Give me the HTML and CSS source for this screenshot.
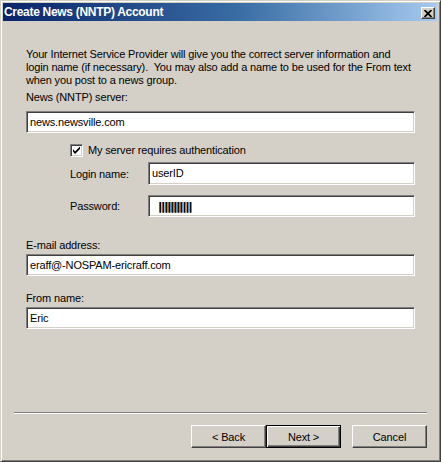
FILE: index.html
```html
<!DOCTYPE html>
<html lang="en">
<head>
    <meta charset="UTF-8">
    <title>Create News (NNTP) Account</title>
    <link rel="stylesheet" href="styles.css">
</head>
<body>
    <div class="window">
        <div class="titlebar">
            <span class="title">Create News (NNTP) Account</span>
            <span class="close">
                <svg width="8" height="7" viewBox="0 0 8 7"><path d="M0.5 0 L7.5 7 M7.5 0 L0.5 7" stroke="#000" stroke-width="1.8"/></svg>
            </span>
        </div>
        <div class="content">
            <p class="intro">Your Internet Service Provider will give you the correct server information and<br>login name (if necessary).&nbsp; You may also add a name to be used for the From text<br>when you post to a news group.</p>

            <div class="field server">
                <label>News (NNTP) server:</label>
                <div class="textbox">news.newsville.com</div>
            </div>

            <div class="auth">
                <div class="check-row">
                    <span class="checkbox">
                        <svg width="9" height="9" viewBox="0 0 9 9"><path d="M1 3 L3 5.5 L8 0.5 L8 3 L3 8 L1 5.5 Z" fill="#000"/></svg>
                    </span>
                    <span>My server requires authentication</span>
                </div>
                <div class="inline-field login">
                    <label>Login name:</label>
                    <div class="textbox">userID</div>
                </div>
                <div class="inline-field password">
                    <label>Password:</label>
                    <div class="textbox"><span class="pw">|||||||||||</span></div>
                </div>
            </div>

            <div class="field email">
                <label>E-mail address:</label>
                <div class="textbox">eraff@-NOSPAM-ericraff.com</div>
            </div>

            <div class="field from">
                <label>From name:</label>
                <div class="textbox">Eric</div>
            </div>
        </div>
        <div class="footer">
            <div class="separator"></div>
            <div class="buttons">
                <button class="btn">&lt; Back</button>
                <button class="btn default">Next &gt;</button>
                <button class="btn cancel">Cancel</button>
            </div>
        </div>
    </div>
</body>
</html>
```

FILE: styles.css
```css
body {
    margin: 0;
    font-family: "Liberation Sans", Arial, sans-serif;
    font-size: 11px;
    letter-spacing: -0.15px;
    color: #000;
    background: #d4d0c8;
}
.window {
    width: 441px;
    height: 462px;
    box-sizing: border-box;
    background: #d4d0c8;
    border-top: 1px solid #d4d0c8;
    border-left: 1px solid #d4d0c8;
    border-right: 1px solid #404040;
    border-bottom: 1px solid #404040;
    box-shadow: inset 1px 1px #fff, inset -1px -1px #808080;
    display: flex;
    flex-direction: column;
}
.titlebar {
    margin: 2px 3px 0 2px;
    height: 18px;
    background: linear-gradient(to right, #0a246a, #3a6ea5 55%, #a6caf0);
    display: flex;
    align-items: center;
    justify-content: space-between;
    padding: 0 2px 0 1px;
}
.title {
    color: #fff;
    font-family: "Liberation Sans", Arial, sans-serif;
    font-weight: bold;
    font-size: 12px;
    letter-spacing: -0.3px;
}
.close {
    width: 14px;
    height: 12px;
    box-sizing: border-box;
    background: #d4d0c8;
    border-top: 1px solid #fff;
    border-left: 1px solid #fff;
    border-right: 1px solid #404040;
    border-bottom: 1px solid #404040;
    box-shadow: inset -1px -1px #808080;
    display: flex;
    align-items: center;
    justify-content: center;
    margin-top: 2px;
}
.content {
    padding: 0 25px 0 25px;
}
.intro {
    margin: 27px 0 0 0;
    line-height: 13px;
    white-space: nowrap;
}
.field label {
    display: block;
    line-height: 13px;
}
.server {
    margin-top: 4px;
}
.server label {
    margin-bottom: 7px;
}
.textbox {
    height: 22px;
    box-sizing: border-box;
    background: #fff;
    border-top: 1px solid #808080;
    border-left: 1px solid #808080;
    border-right: 1px solid #fff;
    border-bottom: 1px solid #fff;
    box-shadow: inset 1px 1px #404040, inset -1px -1px #d4d0c8;
    padding: 0 3px;
    line-height: 20px;
}
.auth {
    padding-left: 44px;
    margin-top: 10px;
}
.check-row {
    display: flex;
    align-items: center;
    gap: 5px;
    height: 14px;
}
.checkbox {
    width: 13px;
    height: 13px;
    box-sizing: border-box;
    background: #fff;
    border-top: 1px solid #808080;
    border-left: 1px solid #808080;
    border-right: 1px solid #fff;
    border-bottom: 1px solid #fff;
    box-shadow: inset 1px 1px #404040, inset -1px -1px #d4d0c8;
    display: flex;
    align-items: center;
    justify-content: center;
}
.inline-field {
    display: flex;
    align-items: center;
}
.inline-field label {
    width: 78px;
}
.inline-field .textbox {
    flex: 1;
}
.login {
    margin-top: 5px;
}
.login .textbox {
    height: 23px;
    line-height: 21px;
}
.password {
    margin-top: 10px;
}
.pw {
    font-family: "DejaVu Sans", sans-serif;
    font-weight: bold;
    font-size: 11px;
    letter-spacing: -1px;
    padding-left: 6px;
    text-shadow: 0.6px 0 #000;
}
.email {
    margin-top: 22px;
}
.email label,
.from label {
    margin-bottom: 2px;
}
.from {
    margin-top: 16px;
}
.footer {
    margin-top: auto;
    padding: 0 13px 13px 13px;
}
.separator {
    border-top: 1px solid #808080;
    border-bottom: 1px solid #fff;
}
.buttons {
    display: flex;
    justify-content: flex-end;
    margin-top: 11px;
}
.btn {
    width: 75px;
    height: 23px;
    box-sizing: border-box;
    background: #d4d0c8;
    font-family: "Liberation Sans", Arial, sans-serif;
    font-size: 11px;
    letter-spacing: -0.15px;
    color: #000;
    border-top: 1px solid #fff;
    border-left: 1px solid #fff;
    border-right: 1px solid #404040;
    border-bottom: 1px solid #404040;
    box-shadow: inset -1px -1px #808080;
    padding: 0;
}
.btn.default {
    border: 1px solid #000;
    box-shadow: inset 1px 1px #fff, inset -1px -1px #404040, inset -2px -2px #808080;
}
.btn.cancel {
    margin-left: 11px;
}
```
